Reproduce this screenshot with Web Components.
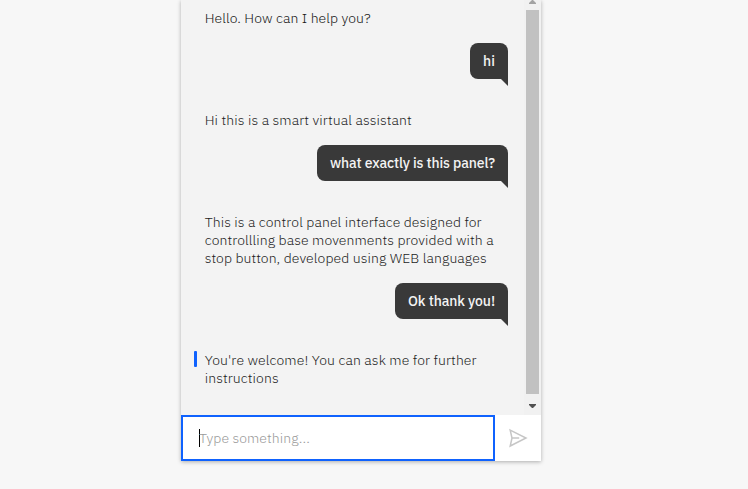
<!DOCTYPE html>
<html lang="en"><head><meta charset="utf-8"><title>Chat</title>
<style>
html,body{margin:0;height:100%;overflow:hidden;background:#f7f7f7}
body{font:14px/18px "IBM Plex Sans Light","IBM Plex Sans",Roboto,"Liberation Sans",sans-serif;font-weight:300;color:#1c1c1c}
</style></head><body>
<chat-panel>
<bot-message><fit-line w="166" style="color:#161616">Hello. How can I help you?</fit-line></bot-message>
<user-message><fit-line w="12">hi</fit-line></user-message>
<bot-message><fit-line w="207">Hi this is a smart virtual assistant</fit-line></bot-message>
<user-message><fit-line w="165">what exactly is this panel?</fit-line></user-message>
<bot-message><fit-line w="277">This is a control panel interface designed for</fit-line><fit-line w="289">controllling base movenments provided with a</fit-line><fit-line w="282">stop button, developed using WEB languages</fit-line></bot-message>
<user-message><fit-line w="87">Ok thank you!</fit-line></user-message>
<bot-message latest><fit-line w="272">You're welcome! You can ask me for further</fit-line><fit-line w="74">instructions</fit-line></bot-message>
<chat-input slot="footer"></chat-input>
</chat-panel>
<script>
const define=(name,html,ready)=>customElements.define(name,class extends HTMLElement{
  connectedCallback(){
    if(this.shadowRoot)return;
    this.attachShadow({mode:'open'}).innerHTML=html;
    if(ready)ready(this);
  }
});
define('chat-panel',`<style>
:host{display:flex;flex-direction:column;width:360px;height:461px;margin-left:181px;background:#f3f3f3;box-shadow:0 1px 4px rgba(0,0,0,.3)}
.body{display:flex;height:415px}
.log{flex:1;padding:9px 16px 0 23.7px;display:flex;flex-direction:column;box-sizing:border-box}
</style><div class="body"><div class="log"><slot></slot></div><scroll-bar></scroll-bar></div><slot name="footer"></slot>`);
define('scroll-bar',`<style>
:host{display:flex;flex-direction:column;width:17px;height:415px;background:#f1f1f1}
.thumb{height:384px;margin:0 2px;background:#c1c1c1}
svg{display:block}
</style><svg width="17" height="10"><path d="M5 4V3L8 0H9L12 3V4Z" fill="#a3a3a3"/></svg><div class="thumb"></div><svg width="17" height="21"><path d="M5 10H12V11L9 14H8L5 11Z" fill="#505050"/></svg>`);
define('bot-message',`<style>
:host{display:block;position:relative}
:host([latest])::before{content:"";position:absolute;left:-10.7px;top:0;width:3px;height:16px;border-radius:1px;background:#0f62fe}
</style><slot></slot>`);
define('user-message',`<style>
:host{display:block;position:relative;align-self:flex-end;margin:16px 0 32px;padding:9px 13px;height:18px;border-radius:8px 8px 0 8px;background:#393939;color:#f3f3f3;font-weight:500}
:host::after{content:"";position:absolute;right:0;top:100%;width:7px;height:7px;background:#393939;clip-path:polygon(0 0,100% 0,100% 100%)}
</style><slot></slot>`);
define('fit-line',`<style>
:host{display:block;white-space:nowrap;height:18px}
span{display:inline-block}
</style><span><slot></slot></span>`,el=>{
  const span=el.shadowRoot.querySelector('span');
  const target=+el.getAttribute('w'),n=el.textContent.length;
  requestAnimationFrame(()=>{
    span.style.letterSpacing=(target-span.getBoundingClientRect().width)/n+'px';
    if(el.parentElement&&el.parentElement.localName==='user-message')el.style.width=target+'px';
  });
});
define('chat-input',`<style>
:host{display:flex;height:46px;background:#fff}
.field{box-sizing:border-box;width:314px;border:2px solid #0f62fe;padding:12px 16px;display:flex;align-items:center;color:#999}
.caret{width:1px;height:18px;margin-right:-1px;background:#000}
.send{width:46px;display:flex;align-items:center;justify-content:center}
</style><div class="field"><i class="caret"></i><fit-line w="111">Type something...</fit-line></div><div class="send"><svg width="20" height="20" viewBox="0 0 20 20" fill="none" stroke="#c6c6c6" stroke-width="1.5" stroke-linejoin="miter"><path d="M2.2 2.1L18 10L2.2 18L4 10Z"/><path d="M4 10H11.2"/></svg></div>`);
</script></body></html>
